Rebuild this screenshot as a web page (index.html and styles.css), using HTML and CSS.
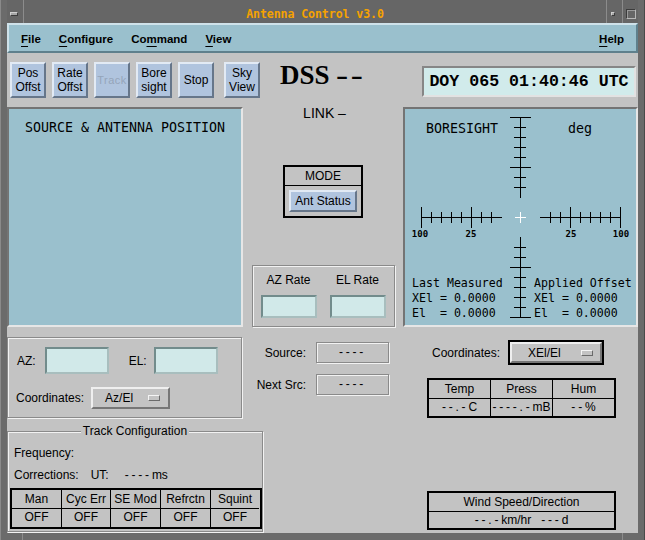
FILE: index.html
```html
<!DOCTYPE html>
<html>
<head>
<meta charset="utf-8">
<title>Antenna Control v3.0</title>
<link rel="stylesheet" href="styles.css">
</head>
<body>
<div class="window">
  <div class="titlebar">
    <div class="tb-cell tb-menu"><span class="tb-min"></span></div>
    <div class="tb-title">Antenna Control v3.0</div>
    <div class="tb-cell tb-iconify"><span class="tb-small"></span></div>
    <div class="tb-cell tb-maximize"><span class="tb-big"></span></div>
  </div>
  <div class="client">
    <div class="menubar">
      <span class="menu"><u>F</u>ile</span>
      <span class="menu"><u>C</u>onfigure</span>
      <span class="menu">Co<u>m</u>mand</span>
      <span class="menu"><u>V</u>iew</span>
      <span class="menu menu-help"><u>H</u>elp</span>
    </div>

    <div class="row row-a">
      <div class="toolbar">
        <div class="tbtn">Pos<br>Offst</div>
        <div class="tbtn">Rate<br>Offst</div>
        <div class="tbtn tbtn-disabled">Track</div>
        <div class="tbtn">Bore<br>sight</div>
        <div class="tbtn">Stop</div>
        <div class="tbtn tbtn-sky">Sky<br>View</div>
      </div>
      <div class="dss">DSS <span class="dss-dash">--</span></div>
      <div class="clock">DOY 065 01:40:46 UTC</div>
    </div>

    <div class="row row-b">
      <div class="src-panel">SOURCE &amp; ANTENNA POSITION</div>
      <div class="middle">
        <div class="link">LINK –</div>
        <div class="mode">
          <div class="mode-title">MODE</div>
          <div class="mode-btn">Ant Status</div>
        </div>
        <div class="rate etched">
          <div class="rate-col">
            <div class="lbl">AZ Rate</div>
            <div class="field field-rate"></div>
          </div>
          <div class="rate-col">
            <div class="lbl">EL Rate</div>
            <div class="field field-rate"></div>
          </div>
        </div>
      </div>
      <div class="bore-panel">
        <svg class="bore-svg" width="231" height="216" viewBox="0 0 231 216">
          <path class="ticks" d="M115.5 8V89 M105 8.5H126 M109 18.5H121 M109 28.5H121 M109 38.5H121 M109 48.5H121 M105 58.5H126 M109 68.5H121 M109 78.5H121
            M115.5 128V209 M109 138.5H121 M109 148.5H121 M105 158.5H126 M109 168.5H121 M109 178.5H121 M109 188.5H121 M109 198.5H121 M105 208.5H126
            M16 108.5H97 M16.5 98V119 M26.5 103V114 M36.5 103V114 M46.5 103V114 M56.5 103V114 M66.5 98V119 M76.5 103V114 M86.5 103V114
            M135 108.5H216 M145.5 103V114 M155.5 103V114 M165.5 98V119 M175.5 103V114 M185.5 103V114 M195.5 103V114 M205.5 103V114 M215.5 98V119"/>
          <path class="cross" d="M110 108.5H121 M115.5 103V114"/>
          <text class="st-big" x="21" y="24">BORESIGHT</text>
          <text class="st-big" x="163" y="24">deg</text>
          <text class="st-num" x="15" y="128">100</text>
          <text class="st-num" x="66" y="128">25</text>
          <text class="st-num" x="166" y="128">25</text>
          <text class="st-num" x="216" y="128">100</text>
          <text class="st-txt" x="7" y="178">Last Measured</text>
          <text class="st-txt" x="7" y="193">XEl = 0.0000</text>
          <text class="st-txt" x="7" y="208">El  = 0.0000</text>
          <text class="st-txt" x="129" y="178">Applied Offset</text>
          <text class="st-txt" x="129" y="193">XEl = 0.0000</text>
          <text class="st-txt" x="129" y="208">El  = 0.0000</text>
        </svg>
      </div>
    </div>

    <div class="row row-c">
      <div class="azel etched">
        <div class="azel-row">
          <span class="lbl">AZ:</span>
          <div class="field field-pos az-field"></div>
          <span class="lbl el-lbl">EL:</span>
          <div class="field field-pos el-field"></div>
        </div>
        <div class="azel-row coord-row-left">
          <span class="lbl">Coordinates:</span>
          <div class="menubtn menubtn-azel">
            <span>Az/El</span>
            <span class="indicator ind-azel"></span>
          </div>
        </div>
      </div>

      <div class="srcgrp">
        <span class="lbl right">Source:</span>
        <div class="srcbox etched"><span class="d">----</span></div>
        <span class="lbl right">Next Src:</span>
        <div class="srcbox etched"><span class="d">----</span></div>
      </div>

      <div class="rightgrp">
        <div class="coord-row">
          <span class="lbl">Coordinates:</span>
          <div class="menubtn-frame">
            <div class="menubtn menubtn-xel">
              <span>XEl/El</span>
              <span class="indicator ind-xel"></span>
            </div>
          </div>
        </div>
        <div class="tab tab-3 weather">
          <div class="cell h">Temp</div>
          <div class="cell h">Press</div>
          <div class="cell h">Hum</div>
          <div class="cell"><span class="d">--.-</span>C</div>
          <div class="cell"><span class="d">----.-</span>mB</div>
          <div class="cell"><span class="d">--</span>%</div>
        </div>
      </div>
    </div>

    <div class="row row-d">
      <div class="track etched">
        <div class="track-title">Track Configuration</div>
        <div class="track-line line-freq">Frequency:</div>
        <div class="track-line line-corr">Corrections:<span class="ut">UT:</span><span class="ms"><span class="d">----</span>ms</span></div>
        <div class="tab tab-5 corr-tab">
          <div class="cell h">Man</div>
          <div class="cell h">Cyc Err</div>
          <div class="cell h">SE Mod</div>
          <div class="cell h">Refrctn</div>
          <div class="cell h">Squint</div>
          <div class="cell">OFF</div>
          <div class="cell">OFF</div>
          <div class="cell">OFF</div>
          <div class="cell">OFF</div>
          <div class="cell">OFF</div>
        </div>
      </div>
      <div class="tab tab-1 wind">
        <div class="cell h">Wind Speed/Direction</div>
        <div class="cell wind-val"><span class="d">--.-</span>km/hr   <span class="d">---</span>d</div>
      </div>
    </div>
  </div>
  <div class="frame-bottom"><span class="mark"></span><span class="mark"></span></div>
</div>
</body>
</html>
```
FILE: styles.css
```css
html, body {
  margin: 0;
  padding: 0;
}
body {
  background: #6b6b6b;
  font-family: "Liberation Sans", Arial, sans-serif;
  font-size: 12px;
  color: #000;
}
.window {
  width: 645px;
  height: 540px;
  box-sizing: border-box;
  padding: 0 7px;
  background: #6b6b6b;
  display: flex;
  flex-direction: column;
  box-shadow: inset 1px 0 0 #8a8a8a, inset -1px 0 0 #4a4a4a;
}

/* title bar */
.titlebar {
  height: 23px;
  flex: none;
  display: flex;
  background: #666;
}
.tb-cell {
  flex: none;
  box-sizing: border-box;
}
.tb-menu {
  width: 17px;
  border-right: 1px solid #8c8c8c;
  padding: 12px 0 0 3px;
}
.tb-min {
  display: block;
  width: 8px;
  height: 4px;
  box-sizing: border-box;
  background: #a6a6a6;
  border: 1px solid;
  border-color: #d0d0d0 #3c3c3c #3c3c3c #d0d0d0;
}
.tb-title {
  flex: 1;
  text-align: center;
  color: #f5a200;
  font-family: "DejaVu Sans Mono", monospace;
  font-size: 11.6px;
  font-weight: bold;
  letter-spacing: -0.1px;
  line-height: 14px;
  padding-top: 7px;
}
.tb-iconify {
  width: 16px;
  border-left: 1px solid #8c8c8c;
  padding: 12px 0 0 4px;
}
.tb-small {
  display: block;
  width: 4px;
  height: 4px;
  box-sizing: border-box;
  background: #a6a6a6;
  border: 1px solid;
  border-color: #d0d0d0 #3c3c3c #3c3c3c #d0d0d0;
}
.tb-maximize {
  width: 16px;
  border-left: 1px solid #8c8c8c;
  padding: 9px 0 0 3px;
}
.tb-big {
  display: block;
  width: 10px;
  height: 10px;
  box-sizing: border-box;
  border: 1px solid;
  border-color: #3c3c3c #b8b8b8 #b8b8b8 #3c3c3c;
  box-shadow: inset 1px 1px 0 #9a9a9a;
}

.frame-bottom {
  height: 7px;
  flex: none;
  display: flex;
  justify-content: space-between;
  margin: 0 -7px;
  padding: 0 22px;
}
.mark {
  width: 1px;
  height: 7px;
  background: #8c8c8c;
}

/* client */
.client {
  flex: 1;
  background: #c3c3c3;
  display: flex;
  flex-direction: column;
}

.menubar {
  height: 30px;
  flex: none;
  box-sizing: border-box;
  background: #9ac0cd;
  border: 2px solid;
  border-color: #cfe2ea #5f808c #5f808c #cfe2ea;
  display: flex;
  align-items: center;
  padding: 0 12px;
  gap: 18px;
}
.menu {
  font-weight: bold;
  font-size: 11.5px;
  line-height: 14px;
  padding-top: 1px;
}
.menu u {
  text-decoration-thickness: 1px;
  text-underline-offset: 3px;
}
.menu-help {
  margin-left: auto;
}

.row {
  display: flex;
  flex: none;
}

/* row A */
.row-a {
  height: 54px;
  align-items: flex-start;
}
.toolbar {
  display: flex;
  gap: 6px;
  margin-left: 3px;
  padding-top: 9px;
}
.tbtn {
  width: 36px;
  height: 36px;
  box-sizing: border-box;
  border: 2px solid;
  border-color: #e2eaf4 #66768a #66768a #e2eaf4;
  background: #b0c4de;
  display: flex;
  align-items: center;
  justify-content: center;
  text-align: center;
  line-height: 14px;
}
.tbtn-disabled {
  color: #95a5ba;
  font-size: 11px;
  letter-spacing: 0.5px;
}
.tbtn-sky {
  margin-left: 4px;
}
.dss {
  margin-left: 20px;
  margin-top: 7px;
  font-family: "Liberation Serif", "Times New Roman", serif;
  font-weight: bold;
  font-size: 27px;
  line-height: 30px;
  white-space: nowrap;
}
.dss-dash {
  display: inline-block;
  letter-spacing: 2px;
  transform: scaleX(1.35);
  transform-origin: left center;
}
.clock {
  margin-left: auto;
  margin-right: 2px;
  margin-top: 13px;
  width: 214px;
  height: 31px;
  box-sizing: border-box;
  border: 2px solid;
  border-color: #868686 #e2e2e2 #e2e2e2 #868686;
  background: #d1ebeb;
  font-family: "Liberation Mono", "Courier New", monospace;
  font-weight: bold;
  font-size: 16.6px;
  line-height: 27px;
  text-align: center;
}

/* row B */
.row-b {
  height: 220px;
}
.src-panel {
  width: 236px;
  box-sizing: border-box;
  border: 2px solid;
  border-color: #747474 #e6e6e6 #e6e6e6 #747474;
  background: #9ac0cd;
  padding-top: 11px;
  text-align: center;
  font-family: "DejaVu Sans Mono", monospace;
  font-size: 13.3px;
  line-height: 16px;
}
.middle {
  width: 160px;
  display: flex;
  flex-direction: column;
  align-items: center;
}
.link {
  font-size: 14px;
  line-height: 12px;
  margin-left: 3px;
}
.mode {
  margin-top: 46px;
  width: 80px;
  height: 53px;
  box-sizing: border-box;
  border: 2px solid #000;
  display: flex;
  flex-direction: column;
  align-items: center;
}
.mode-title {
  align-self: stretch;
  height: 19px;
  box-sizing: border-box;
  border-bottom: 1px solid #000;
  text-align: center;
  line-height: 18px;
}
.mode-btn {
  margin-top: 4px;
  width: 68px;
  height: 22px;
  box-sizing: border-box;
  border: 2px solid;
  border-color: #e2eaf4 #66768a #66768a #e2eaf4;
  background: #b0c4de;
  text-align: center;
  line-height: 18px;
}
.etched {
  border: 1px solid #8a8a8a;
  box-shadow: inset 1px 1px 0 #f2f2f2, 1px 1px 0 #f2f2f2;
}
.rate {
  margin-top: 47px;
  width: 143px;
  height: 62px;
  box-sizing: border-box;
  display: flex;
  gap: 13px;
  padding: 7px 0 0 8px;
}
.rate-col {
  width: 56px;
  display: flex;
  flex-direction: column;
  align-items: center;
}
.lbl {
  line-height: 14px;
  white-space: nowrap;
}
.field {
  box-sizing: border-box;
  background: #d1e9e9;
  border: 2px solid;
  border-color: #728c8c #a8bebe #a8bebe #728c8c;
}
.field-rate {
  width: 56px;
  height: 23px;
  margin-top: 8px;
}
.bore-panel {
  width: 235px;
  box-sizing: border-box;
  border: 2px solid;
  border-color: #747474 #e6e6e6 #e6e6e6 #747474;
  background: #9ac0cd;
}
.bore-svg {
  display: block;
}
.ticks {
  stroke: #000;
  stroke-width: 1;
  fill: none;
  shape-rendering: crispEdges;
}
.cross {
  stroke: #fff;
  stroke-width: 1;
  fill: none;
  shape-rendering: crispEdges;
}
.st-big {
  font-family: "DejaVu Sans Mono", monospace;
  font-size: 13.3px;
  fill: #000;
}
.st-txt {
  font-family: "DejaVu Sans Mono", monospace;
  font-size: 11.6px;
  fill: #000;
  white-space: pre;
}
.st-num {
  font-family: "DejaVu Sans Mono", monospace;
  font-weight: bold;
  font-size: 9px;
  text-anchor: middle;
  fill: #000;
}

/* row C */
.row-c {
  height: 97px;
  align-items: flex-start;
}
.azel {
  margin-top: 10px;
  width: 235px;
  height: 81px;
  box-sizing: border-box;
  padding: 9px 0 0 9px;
}
.azel-row {
  display: flex;
  align-items: center;
}
.field-pos {
  width: 64px;
  height: 27px;
}
.az-field {
  margin-left: 9px;
}
.el-lbl {
  margin-left: 20px;
}
.el-field {
  margin-left: 7px;
}
.coord-row-left {
  margin-top: 13px;
  margin-left: -1px;
}
.menubtn {
  box-sizing: border-box;
  border: 2px solid;
  border-color: #efefef #767676 #767676 #efefef;
  background: #c3c3c3;
  display: flex;
  align-items: center;
  line-height: 14px;
}
.menubtn-azel {
  margin-left: 7px;
  width: 79px;
  height: 22px;
  padding-left: 12px;
}
.indicator {
  width: 12px;
  height: 6px;
  box-sizing: border-box;
  border: 1px solid;
  border-color: #f4f4f4 #6a6a6a #6a6a6a #f4f4f4;
  background: #c3c3c3;
}
.ind-azel {
  margin-left: 15px;
}
.srcgrp {
  margin-left: 12px;
  margin-top: 15px;
  display: grid;
  grid-template-columns: 52px 73px;
  column-gap: 10px;
  row-gap: 11px;
  align-items: center;
}
.right {
  text-align: right;
}
.srcbox {
  height: 21px;
  box-sizing: border-box;
  text-align: center;
  line-height: 19px;
}
.d {
  letter-spacing: 2.8px;
}
.rightgrp {
  margin-left: 38px;
  margin-top: 13px;
  width: 189px;
}
.coord-row {
  display: flex;
  align-items: center;
  padding-left: 5px;
  gap: 8px;
}
.menubtn-frame {
  width: 96px;
  height: 25px;
  box-sizing: border-box;
  border: 2px solid #000;
}
.menubtn-xel {
  width: 92px;
  height: 21px;
  padding-left: 16px;
}
.ind-xel {
  margin-left: 20px;
}

/* tables */
.tab {
  display: grid;
  border: 2px solid #000;
}
.cell {
  box-sizing: border-box;
  border-right: 1px solid #000;
  text-align: center;
  line-height: 17px;
  white-space: pre;
}
.cell.h {
  border-bottom: 1px solid #000;
  line-height: 18px;
}
.tab-3 .cell:nth-child(3n),
.tab-5 .cell:nth-child(5n),
.tab-1 .cell {
  border-right: 0;
}
.weather {
  margin-top: 13px;
  grid-template-columns: 62px 62px 61px;
  grid-template-rows: 19px 17px;
}

/* row D */
.row-d {
  height: 109px;
  align-items: flex-start;
}
.track {
  margin-top: 7px;
  width: 256px;
  height: 101px;
  box-sizing: border-box;
  display: flex;
  flex-direction: column;
}
.track-title {
  align-self: center;
  margin-top: -8px;
  background: #c3c3c3;
  padding: 0 2px;
  line-height: 14px;
}
.track-line {
  padding-left: 6px;
  line-height: 14px;
  white-space: nowrap;
}
.line-freq {
  margin-top: 8px;
}
.line-corr {
  margin-top: 8px;
}
.ut {
  margin-left: 12px;
}
.ms {
  margin-left: 16px;
}
.corr-tab {
  margin-top: 6px;
  margin-left: 2px;
  grid-template-columns: 50px 49px 50px 50px 48px;
  grid-template-rows: 19px 18px;
}
.wind {
  margin-left: 164px;
  margin-top: 67px;
  grid-template-columns: 185px;
  grid-template-rows: 19px 16px;
}
.wind-val {
  line-height: 16px;
}
```
